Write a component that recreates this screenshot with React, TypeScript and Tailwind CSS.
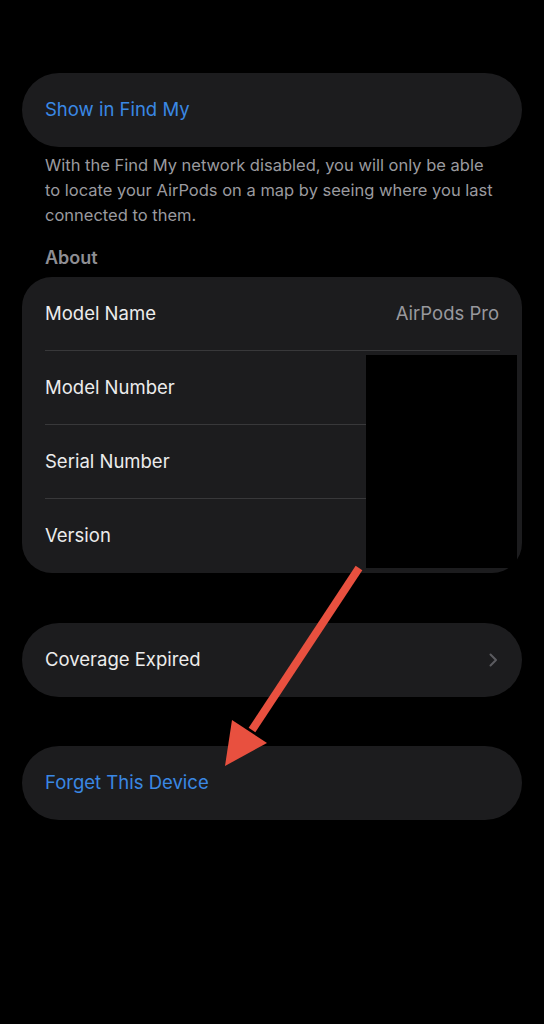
import React from "react";

const font = { fontFamily: "Inter, 'Noto Sans', sans-serif" };

function Row({ label, value, last }: { label: string; value?: string; last?: boolean }) {
  return (
    <div className="relative flex h-[74px] items-center justify-between px-[23px]">
      <span className="text-[18.5px] text-[#ececec]">{label}</span>
      {value && <span className="text-[18.5px] text-[#98989d]">{value}</span>}
      {!last && <div className="absolute bottom-0 left-[23px] right-[22px] h-px bg-[#38383a]" />}
    </div>
  );
}

function Arrow() {
  return (
    <svg className="pointer-events-none absolute left-0 top-0" width="544" height="1024" viewBox="0 0 544 1024">
      <line x1="359" y1="568" x2="252" y2="730" stroke="#e8503f" strokeWidth="8" />
      <polygon points="225,766 232,720 267,743" fill="#e8503f" />
    </svg>
  );
}

export default function App() {
  return (
    <div className="relative min-h-[1024px] w-[544px] overflow-hidden bg-black pt-[73px]" style={font}>
      <div className="mx-[22px] flex h-[74px] items-center rounded-full bg-[#1c1c1e] px-[23px]">
        <span className="text-[18.5px] text-[#3a88e4]">Show in Find My</span>
      </div>

      <p className="ml-[45px] mt-[6px] w-[450px] text-[16.5px] leading-[25px] text-[#9a9a9f]">
        With the Find My network disabled, you will only be able to locate your AirPods on a map by seeing where you last connected to them.
      </p>

      <div className="mt-[18px] px-[45px] text-[18px] font-semibold leading-[24px] text-[#8e8e93]">About</div>

      <div className="mx-[22px] mt-[7px] overflow-hidden rounded-[30px] bg-[#1c1c1e]">
        <Row label="Model Name" value="AirPods Pro" />
        <Row label="Model Number" />
        <Row label="Serial Number" />
        <Row label="Version" last />
      </div>

      <div className="mx-[22px] mt-[50px] flex h-[74px] items-center justify-between rounded-full bg-[#1c1c1e] pl-[23px] pr-[24px]">
        <span className="text-[18.5px] text-[#ececec]">Coverage Expired</span>
        <svg width="9" height="14" viewBox="0 0 9 14" fill="none">
          <path d="M1.5 1.5 L7 7 L1.5 12.5" stroke="#5c5c60" strokeWidth="2" strokeLinecap="round" strokeLinejoin="round" />
        </svg>
      </div>

      <div className="mx-[22px] mt-[49px] flex h-[74px] items-center rounded-full bg-[#1c1c1e] px-[23px]">
        <span className="text-[18.5px] text-[#3a88e4]">Forget This Device</span>
      </div>

      <div className="absolute left-[366px] top-[355px] h-[213px] w-[151px] bg-black" />
      <Arrow />
    </div>
  );
}
